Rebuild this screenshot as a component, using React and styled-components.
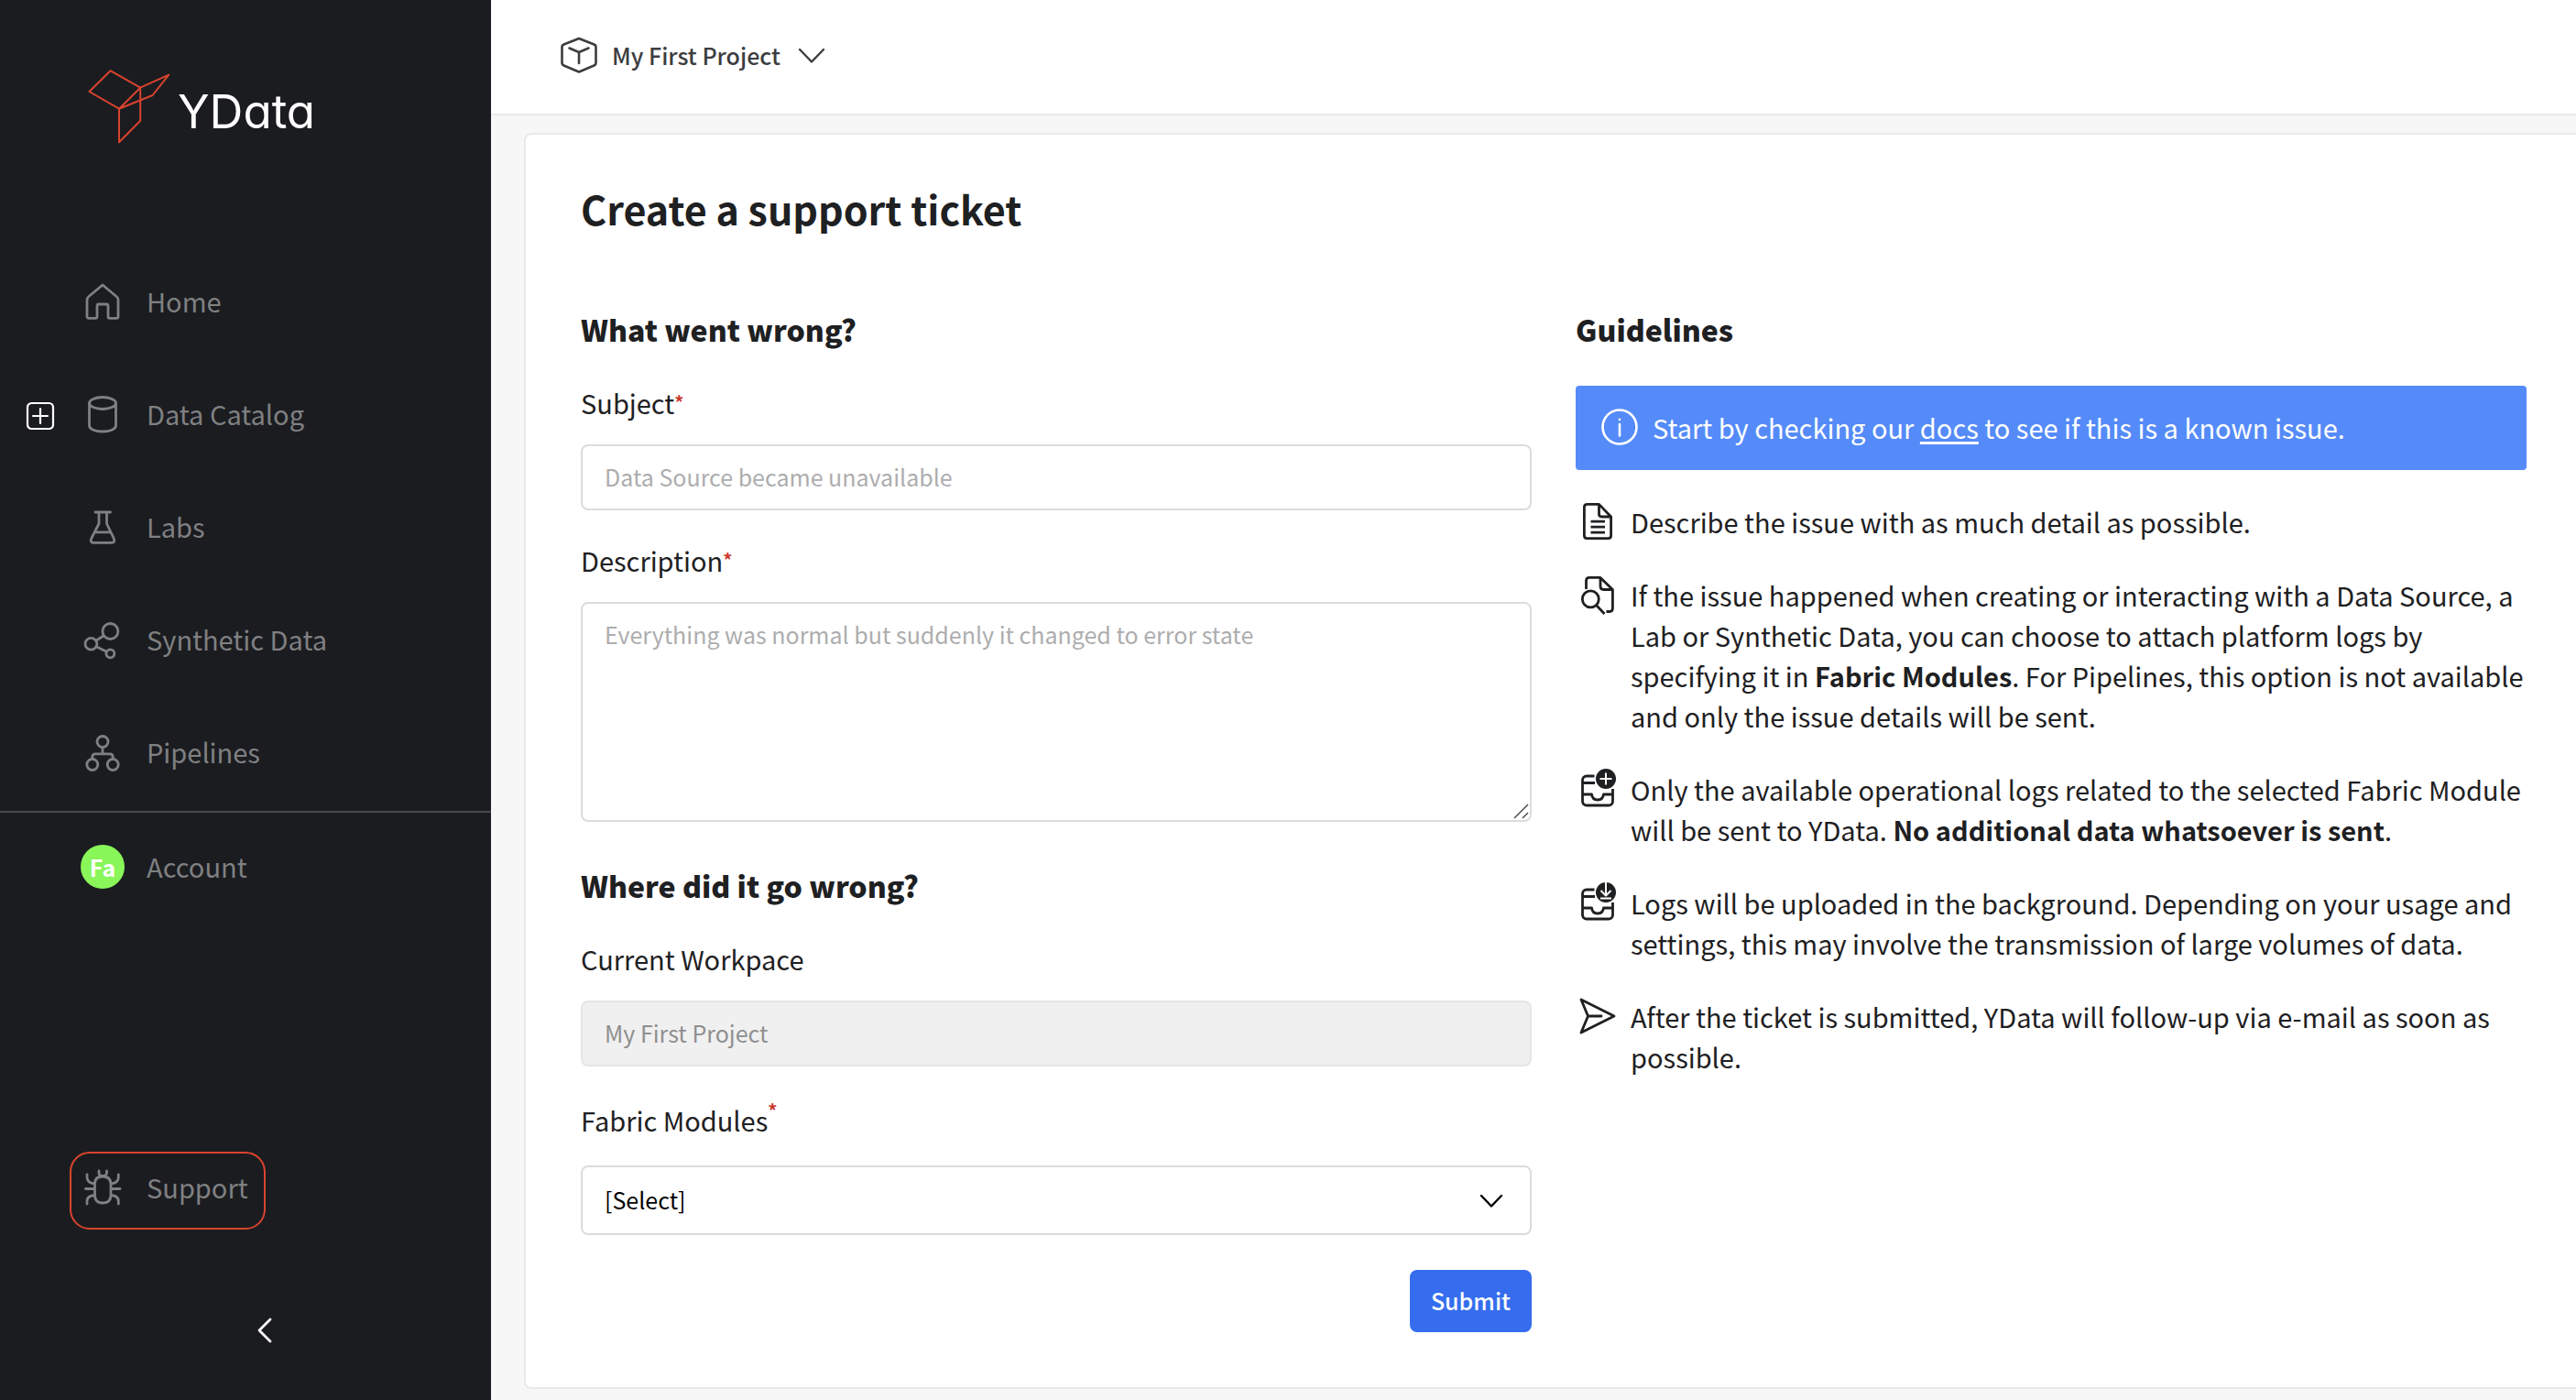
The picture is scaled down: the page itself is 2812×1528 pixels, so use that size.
import React from "react";
import styled, { createGlobalStyle } from "styled-components";

const font = `"Source Sans Pro", "Noto Sans CJK SC", "Noto Sans", sans-serif`;

const GlobalStyle = createGlobalStyle`
  *, *::before, *::after { box-sizing: border-box; }
  body { margin: 0; background: #f7f7f8; color: #1e2022; font-family: ${font}; font-size: 29px; line-height: 44px; }
  h1, h2, p, ul { margin: 0; padding: 0; }
  ul { list-style: none; }
  button, input, textarea, select { font-family: inherit; }
  svg { display: block; flex: none; }
`;

const Page = styled.div`
  display: flex;
  min-height: 100vh;
`;

const Sidebar = styled.aside`
  display: flex;
  flex-direction: column;
  flex: none;
  width: 536px;
  padding: 76px 0 61px;
  background: #1b1c20;
`;

const Brand = styled.a`
  display: flex;
  gap: 8px;
  height: 82px;
  margin: 0 0 109px 96px;
  color: #fff;
  text-decoration: none;
`;

const BrandName = styled.span`
  padding-top: 16px;
  font-family: Inter, sans-serif;
  font-size: 51px;
  line-height: 60px;
  font-feature-settings: "cv11" 1;
`;

const NavList = styled.ul`
  padding-bottom: 3px;
  border-bottom: 2px solid #4a4b4e;
`;

const NavRow = styled.li`
  display: grid;
  grid-template-columns: 88px 1fr;
  align-items: center;
  height: ${(p) => p.$height || 123}px;
`;

const NavLink = styled.a`
  grid-column: 2;
  display: flex;
  align-items: center;
  gap: 24px;
  color: #7f8082;
  text-decoration: none;
`;

const NavLabel = styled.span`
  padding-bottom: 2px;
`;

const ExpandButton = styled.button`
  justify-self: end;
  margin-right: 28px;
  padding: 4px 0 0;
  border: 0;
  background: none;
  color: #fff;
`;

const Avatar = styled.span`
  display: grid;
  place-items: center;
  width: 48px;
  height: 48px;
  border-radius: 50%;
  background: #89f65a;
  color: #fff;
  font-size: 25px;
  font-weight: 700;
`;

const SupportLink = styled(NavLink)`
  align-self: flex-start;
  margin: auto 0 0 76px;
  padding: 13px 17px 20px 10px;
  border: 2px solid #d9452d;
  border-radius: 22px;
`;

const CollapseButton = styled.button`
  align-self: flex-start;
  margin: 95px 0 0 280px;
  padding: 0;
  border: 0;
  background: none;
  color: #fff;
`;

const Content = styled.div`
  display: flex;
  flex-direction: column;
  flex: 1;
  min-width: 0;
`;

const TopBar = styled.header`
  display: flex;
  align-items: flex-start;
  height: 126px;
  padding: 38px 76px;
  background: #fff;
  border-bottom: 2px solid #e9e9ea;
`;

const ProjectButton = styled.button`
  display: flex;
  align-items: center;
  height: 44px;
  padding: 0;
  border: 0;
  background: none;
  color: #3c3d3f;
  font-size: 25px;
  font-weight: 500;
`;

const ProjectName = styled.span`
  padding: 0 19px 1px 16px;
`;

const Main = styled.main`
  flex: 1;
  display: flex;
  padding: 19px 0 12px 36px;
`;

const Card = styled.section`
  flex: 1;
  padding: 48px 54px 60px 60px;
  background: #fff;
  border: 2px solid #e9e9ea;
  border-right: 0;
  border-radius: 8px 0 0 8px;
`;

const Title = styled.h1`
  margin-bottom: 74px;
  font-size: 43px;
  line-height: 64px;
  font-weight: 700;
`;

const Columns = styled.div`
  display: grid;
  grid-template-columns: 1fr 1fr;
  gap: 48px;
`;

const SectionTitle = styled.h2`
  font-size: 32px;
  line-height: 52px;
  font-weight: 900;
`;

const Form = styled.form`
  display: flex;
  flex-direction: column;
  gap: 43px;
`;

const Group = styled.div`
  display: flex;
  flex-direction: column;
  gap: 32px;
`;

const Field = styled.div`
  display: flex;
  flex-direction: column;
  gap: 24px;
`;

const Label = styled.label`
  display: flex;
  align-items: flex-start;
  line-height: ${(p) => (p.$tall ? 52 : 44)}px;
`;

const Required = styled.span`
  color: #c9372c;
  font-size: 20px;
  font-weight: 700;
  line-height: ${(p) => (p.$raised ? 32 : 44)}px;
`;

const inputStyle = `
  display: block;
  width: 100%;
  border: 2px solid #dcdcdd;
  border-radius: 8px;
  background: #fff;
  color: #000;
  font-size: 25px;
  line-height: 40px;
  outline: none;
  &::placeholder { color: #adadae; opacity: 1; }
`;

const TextInput = styled.input`
  ${inputStyle}
  height: 72px;
  padding: 0 24px 2px;
  &:disabled { background: #f0f0f0; border-color: #e5e5e5; color: #8f8f90; }
`;

const Overlaid = styled.div`
  position: relative;
`;

const TextArea = styled.textarea`
  ${inputStyle}
  height: 240px;
  padding: 13px 24px;
  resize: none;
`;

const Grip = styled.svg`
  position: absolute;
  right: 3px;
  bottom: 3px;
`;

const Select = styled.select`
  ${inputStyle}
  height: 76px;
  padding: 0 24px 2px;
  appearance: none;
`;

const SelectArrow = styled.svg`
  position: absolute;
  right: 31px;
  top: 31px;
  pointer-events: none;
`;

const Submit = styled.button`
  align-self: flex-end;
  height: 68px;
  margin-top: 6px;
  padding: 0 23px 2px;
  border: 0;
  border-radius: 8px;
  background: #356dee;
  color: #fff;
  font-size: 25px;
  font-weight: 500;
`;

const Guidelines = styled.div`
  display: flex;
  flex-direction: column;
`;

const Notice = styled.p`
  display: flex;
  align-items: center;
  gap: 16px;
  height: 92px;
  margin: 36px 0 34px;
  padding: 0 28px 3px;
  border-radius: 4px;
  background: #558bf8;
  color: #fff;
  a { color: inherit; text-decoration-thickness: 3px; text-underline-offset: 3px; }
`;

const Tips = styled.ul`
  display: flex;
  flex-direction: column;
  gap: 36px;
`;

const Tip = styled.li`
  display: flex;
  gap: 12px;
`;

const NavIcon = ({ children }) => (
  <svg width="48" height="48" viewBox="0 0 48 48" fill="none" stroke="currentColor" strokeWidth="2.8" strokeLinecap="round" strokeLinejoin="round" aria-hidden="true">
    {children}
  </svg>
);

const TipIcon = ({ children }) => (
  <svg width="48" height="44" viewBox="0 0 48 44" fill="none" stroke="currentColor" strokeWidth="2.8" strokeLinejoin="round" aria-hidden="true">
    {children}
  </svg>
);

const InboxShape = () => (
  <path d="M20.5 8H12a4.5 4.5 0 0 0-4.500 4.500V35.500a4.500 4.500 0 0 0 4.500 4.500H36a4.500 4.500 0 0 0 4.500-4.500V22M7.500 15.500H21M7.500 28H17.500C18 32 20.500 34 24 34s6-2 6.500-6H40.500" />
);

const InboxBadge = ({ children }) => (
  <>
    <circle cx="33" cy="11" r="12" fill="#fff" stroke="none" />
    <circle cx="33" cy="11" r="11" fill="currentColor" stroke="none" />
    <g stroke="#fff" strokeWidth="2">{children}</g>
  </>
);

const navItems = [
  {
    label: "Home",
    icon: <path d="M24 6 39 18.500Q41 20 41 22.500V40.500Q41 42.300 39.200 42.300H31.800Q30 42.300 30 40.500V29Q30 27 28 27H20Q18 27 18 29V40.500Q18 42.300 16.200 42.300H8.800Q7 42.300 7 40.500V22.500Q7 20 9 18.500Z" />,
  },
  {
    label: "Data Catalog",
    expandable: true,
    icon: (
      <>
        <ellipse cx="24" cy="12" rx="14.500" ry="6.500" />
        <path d="M9.500 12V36.500C9.500 40.500 16 43 24 43S38.500 40.500 38.500 36.500V12" />
      </>
    ),
  },
  {
    label: "Labs",
    icon: <path d="M16 8H32.500M20 8V20.500L11.800 36.500Q10 41.300 14 41.300H34Q38 41.300 36.200 36.500L28.500 20.500V8M16 29.800H32.500" />,
  },
  {
    label: "Synthetic Data",
    icon: (
      <>
        <circle cx="32.400" cy="15" r="8.500" />
        <circle cx="11.400" cy="28.800" r="6.400" />
        <circle cx="32.400" cy="39.300" r="4.500" />
        <path d="M16.800 25.200 25.300 19.700M17.200 31.700 28.300 37.200" />
      </>
    ),
  },
  {
    label: "Pipelines",
    icon: (
      <>
        <circle cx="24" cy="12.500" r="6" />
        <circle cx="12.800" cy="37.500" r="6" />
        <circle cx="35.200" cy="37.500" r="6" />
        <path d="M24 18.500V25.800M12.800 31.500V29Q12.800 25.800 16 25.800H32Q35.200 25.800 35.200 29V31.500" />
      </>
    ),
  },
];

const tips = [
  {
    icon: (
      <>
        <path d="M12 3.400H25.500L38.600 17V37.500Q38.600 40.600 35.500 40.600H12.500Q9.400 40.600 9.400 37.500V6.500Q9.400 3.400 12.500 3.400M25.500 3.400V14Q25.500 17 28.500 17H38.600" />
        <path d="M16.500 22.200H32M16.500 28.200H32M16.500 34.200H32" />
      </>
    ),
    text: "Describe the issue with as much detail as possible.",
  },
  {
    icon: (
      <>
        <path d="M11.500 16V7Q11.500 3.400 15 3.400H27L40.400 16.500V37Q40.400 40.500 37 40.500H33.500M27 3.400V13Q27 16.500 30.500 16.500H40.400" />
        <circle cx="16.300" cy="26.800" r="9" />
        <path d="M22.500 33.500 31.500 43" />
      </>
    ),
    text: (
      <>
        If the issue happened when creating or interacting with a Data Source, a Lab or Synthetic Data, you can choose
        to attach platform logs by specifying it in <strong>Fabric Modules</strong>. For Pipelines, this option is not
        available and only the issue details will be sent.
      </>
    ),
  },
  {
    icon: (
      <>
        <InboxShape />
        <InboxBadge>
          <path d="M33 4.500V17.500M26.500 11H39.500" />
        </InboxBadge>
      </>
    ),
    text: (
      <>
        Only the available operational logs related to the selected Fabric Module will be sent to YData.{" "}
        <strong>No additional data whatsoever is sent</strong>.
      </>
    ),
  },
  {
    icon: (
      <>
        <InboxShape />
        <InboxBadge>
          <path d="M33 0V14M27.500 9 33 14.500 38.500 9M27 17.500H39" />
        </InboxBadge>
      </>
    ),
    text: "Logs will be uploaded in the background. Depending on your usage and settings, this may involve the transmission of large volumes of data.",
  },
  {
    icon: <path d="M6 4 42 22 6 40 13.500 22ZM13.500 22H28" strokeLinecap="round" />,
    text: "After the ticket is submitted, YData will follow-up via e-mail as soon as possible.",
  },
];

export default function App() {
  return (
    <Page>
      <GlobalStyle />
      <Sidebar>
        <Brand href="#">
          <svg width="90" height="82" viewBox="0 0 90 82" fill="none" stroke="#d8432e" strokeWidth="2" strokeLinejoin="round" aria-hidden="true">
            <path d="M1.500 24 24.500 1.200 57.200 19.700 34 42.700ZM57.200 19.700 88.300 5.700 70.500 28 34 42.700M57.200 19.700V55.700L34 79.300V42.700" />
          </svg>
          <BrandName>YData</BrandName>
        </Brand>
        <nav>
          <NavList>
            {navItems.map((item) => (
              <NavRow key={item.label}>
                {item.expandable && (
                  <ExpandButton type="button" aria-label={`Expand ${item.label}`}>
                    <svg width="32" height="32" viewBox="0 0 32 32" fill="none" stroke="currentColor" strokeWidth="2.200" strokeLinecap="round">
                      <rect x="2" y="2" width="28" height="28" rx="4.500" />
                      <path d="M16 8V24M8 16H24" />
                    </svg>
                  </ExpandButton>
                )}
                <NavLink href="#">
                  <NavIcon>{item.icon}</NavIcon>
                  <NavLabel>{item.label}</NavLabel>
                </NavLink>
              </NavRow>
            ))}
          </NavList>
          <ul>
            <NavRow $height={118}>
              <NavLink href="#">
                <Avatar>Fa</Avatar>
                <NavLabel>Account</NavLabel>
              </NavLink>
            </NavRow>
          </ul>
        </nav>
        <SupportLink href="#">
          <NavIcon>
            <path d="M15.500 20Q15.500 12 24 12T33 20V32Q33 41 24.200 41T15.500 32ZM20 6V8Q20 11.500 24.200 11.500T28.500 8V6M7 10V13Q7 19 15.500 20M41.300 10V13Q41.300 19 33 20M5.500 25.500H15.500M33 25.500H43M7 42V39Q7 33 15.500 32.500M41.300 42V39Q41.300 33 33 32.500" />
          </NavIcon>
          <NavLabel>Support</NavLabel>
        </SupportLink>
        <CollapseButton type="button" aria-label="Collapse menu">
          <svg width="18" height="30" viewBox="0 0 18 30" fill="none" stroke="currentColor" strokeWidth="2.800" strokeLinecap="round" strokeLinejoin="round">
            <path d="M15 3 3 15 15 27" />
          </svg>
        </CollapseButton>
      </Sidebar>
      <Content>
        <TopBar>
          <ProjectButton type="button">
            <svg width="40" height="40" viewBox="0 0 40 40" fill="none" stroke="currentColor" strokeWidth="2.600" strokeLinecap="round" strokeLinejoin="round" aria-hidden="true">
              <path d="M20 2 36.500 8.500Q38.500 9.300 38.500 11.500V28.500Q38.500 30.700 36.500 31.500L20 38.500 3.500 31.500Q1.500 30.700 1.500 28.500V11.500Q1.500 9.300 3.500 8.500ZM9.500 12.500 20 17 30.500 12.500M20 17V29" />
            </svg>
            <ProjectName>My First Project</ProjectName>
            <svg width="30" height="18" viewBox="0 0 30 18" fill="none" stroke="currentColor" strokeWidth="2.400" strokeLinecap="round" strokeLinejoin="round" aria-hidden="true">
              <path d="M2 3 15 16.500 28 3" />
            </svg>
          </ProjectButton>
        </TopBar>
        <Main>
          <Card>
            <Title>Create a support ticket</Title>
            <Columns>
              <Form>
                <Group>
                  <SectionTitle>What went wrong?</SectionTitle>
                  <Field>
                    <Label htmlFor="subject">
                      Subject<Required>*</Required>
                    </Label>
                    <TextInput id="subject" type="text" placeholder="Data Source became unavailable" />
                  </Field>
                  <Field>
                    <Label htmlFor="description">
                      Description<Required>*</Required>
                    </Label>
                    <Overlaid>
                      <TextArea id="description" placeholder="Everything was normal but suddenly it changed to error state" />
                      <Grip width="17" height="17" viewBox="0 0 17 17" stroke="#4f4f4f" strokeWidth="1.500" aria-hidden="true">
                        <path d="M1 16 16 1M10 16 16 10" />
                      </Grip>
                    </Overlaid>
                  </Field>
                </Group>
                <Group>
                  <SectionTitle>Where did it go wrong?</SectionTitle>
                  <Field>
                    <Label htmlFor="workspace">Current Workpace</Label>
                    <TextInput id="workspace" type="text" value="My First Project" disabled readOnly />
                  </Field>
                  <Field>
                    <Label htmlFor="modules" $tall>
                      Fabric Modules<Required $raised>*</Required>
                    </Label>
                    <Overlaid>
                      <Select id="modules">
                        <option>[Select]</option>
                      </Select>
                      <SelectArrow width="26" height="16" viewBox="0 0 26 16" fill="none" stroke="#000" strokeWidth="2.400" strokeLinecap="round" strokeLinejoin="round" aria-hidden="true">
                        <path d="M2 2 13 13.500 24 2" />
                      </SelectArrow>
                    </Overlaid>
                  </Field>
                  <Submit type="submit">Submit</Submit>
                </Group>
              </Form>
              <Guidelines>
                <SectionTitle>Guidelines</SectionTitle>
                <Notice>
                  <svg width="40" height="40" viewBox="0 0 40 40" fill="none" stroke="currentColor" strokeWidth="2.600" strokeLinecap="round" aria-hidden="true">
                    <circle cx="20" cy="20" r="18.500" />
                    <path d="M20 17V29.500M20 11.800V12" />
                  </svg>
                  <span>
                    Start by checking our <a href="#">docs</a> to see if this is a known issue.
                  </span>
                </Notice>
                <Tips>
                  {tips.map((tip, i) => (
                    <Tip key={i}>
                      <TipIcon>{tip.icon}</TipIcon>
                      <p>{tip.text}</p>
                    </Tip>
                  ))}
                </Tips>
              </Guidelines>
            </Columns>
          </Card>
        </Main>
      </Content>
    </Page>
  );
}
